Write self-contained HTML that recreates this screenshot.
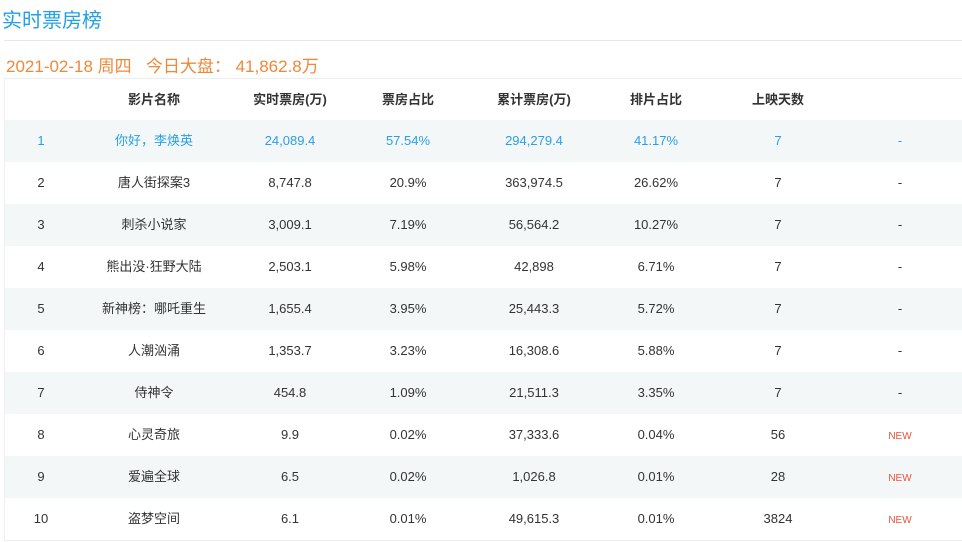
<!DOCTYPE html>
<html><head><meta charset="utf-8"><style>
body{margin:0;width:962px;height:542px;background:#fff;font-family:"Liberation Sans","Noto Sans CJK SC",sans-serif;overflow:hidden;position:relative}
.t{position:absolute;left:2px;top:4px;font-size:20px;color:#22a0e6}
.hr{position:absolute;left:4px;right:0;top:40px;border-top:1px solid #e8e8e8}
.d{position:absolute;left:6px;top:52px;font-size:17px;color:#f0883a}
.tb{position:absolute;left:4px;top:78px;width:958px;border-left:1px solid #eee;border-top:1px solid #eee}
.r{position:relative;height:42px;font-size:13px;color:#333}
.r.h{height:41px;font-weight:bold;color:#333}
.r.s{background:#f4f7f8}
.r.b{color:#28a0e8}
.r span{position:absolute;top:0;line-height:42px;width:140px;margin-left:-71px;text-align:center}
.r.h span{line-height:41px}
.n{color:#f0503a;font-size:10px;top:2px!important}
</style></head><body>
<div class="t">实时票房榜</div>
<div class="hr"></div>
<div class="d">2021-02-18 周四&nbsp;&nbsp; 今日大盘： 41,862.8万</div>
<div class="tb">
<div class="r h"><span style="left:150px">影片名称</span><span style="left:286px">实时票房(万)</span><span style="left:404px">票房占比</span><span style="left:530px">累计票房(万)</span><span style="left:652px">排片占比</span><span style="left:774px">上映天数</span></div>
<div class="r s b"><span style="left:37px">1</span><span style="left:150px">你好，李焕英</span><span style="left:286px">24,089.4</span><span style="left:404px">57.54%</span><span style="left:530px">294,279.4</span><span style="left:652px">41.17%</span><span style="left:774px">7</span><span style="left:896px">-</span></div>
<div class="r"><span style="left:37px">2</span><span style="left:150px">唐人街探案3</span><span style="left:286px">8,747.8</span><span style="left:404px">20.9%</span><span style="left:530px">363,974.5</span><span style="left:652px">26.62%</span><span style="left:774px">7</span><span style="left:896px">-</span></div>
<div class="r s"><span style="left:37px">3</span><span style="left:150px">刺杀小说家</span><span style="left:286px">3,009.1</span><span style="left:404px">7.19%</span><span style="left:530px">56,564.2</span><span style="left:652px">10.27%</span><span style="left:774px">7</span><span style="left:896px">-</span></div>
<div class="r"><span style="left:37px">4</span><span style="left:150px">熊出没·狂野大陆</span><span style="left:286px">2,503.1</span><span style="left:404px">5.98%</span><span style="left:530px">42,898</span><span style="left:652px">6.71%</span><span style="left:774px">7</span><span style="left:896px">-</span></div>
<div class="r s"><span style="left:37px">5</span><span style="left:150px">新神榜：哪吒重生</span><span style="left:286px">1,655.4</span><span style="left:404px">3.95%</span><span style="left:530px">25,443.3</span><span style="left:652px">5.72%</span><span style="left:774px">7</span><span style="left:896px">-</span></div>
<div class="r"><span style="left:37px">6</span><span style="left:150px">人潮汹涌</span><span style="left:286px">1,353.7</span><span style="left:404px">3.23%</span><span style="left:530px">16,308.6</span><span style="left:652px">5.88%</span><span style="left:774px">7</span><span style="left:896px">-</span></div>
<div class="r s"><span style="left:37px">7</span><span style="left:150px">侍神令</span><span style="left:286px">454.8</span><span style="left:404px">1.09%</span><span style="left:530px">21,511.3</span><span style="left:652px">3.35%</span><span style="left:774px">7</span><span style="left:896px">-</span></div>
<div class="r"><span style="left:37px">8</span><span style="left:150px">心灵奇旅</span><span style="left:286px">9.9</span><span style="left:404px">0.02%</span><span style="left:530px">37,333.6</span><span style="left:652px">0.04%</span><span style="left:774px">56</span><span style="left:896px" class="n">NEW</span></div>
<div class="r s"><span style="left:37px">9</span><span style="left:150px">爱遍全球</span><span style="left:286px">6.5</span><span style="left:404px">0.02%</span><span style="left:530px">1,026.8</span><span style="left:652px">0.01%</span><span style="left:774px">28</span><span style="left:896px" class="n">NEW</span></div>
<div class="r" style="border-bottom:1px solid #eee"><span style="left:37px">10</span><span style="left:150px">盗梦空间</span><span style="left:286px">6.1</span><span style="left:404px">0.01%</span><span style="left:530px">49,615.3</span><span style="left:652px">0.01%</span><span style="left:774px">3824</span><span style="left:896px" class="n">NEW</span></div>
</div>
</body></html>
